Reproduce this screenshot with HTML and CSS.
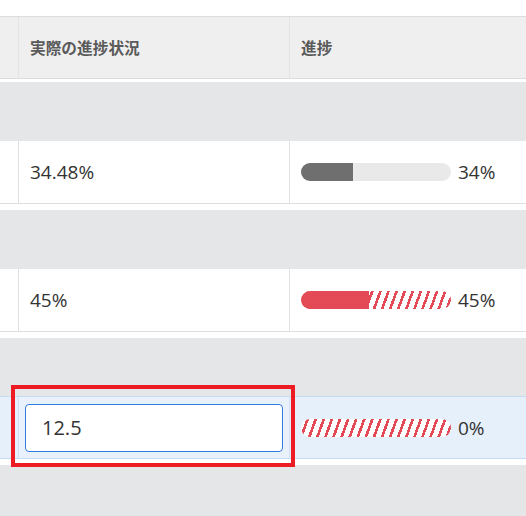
FILE: index.html
```html
<!DOCTYPE html>
<html lang="ja">
<head>
<meta charset="utf-8">
<link rel="stylesheet" href="styles.css">
</head>
<body>
<div class="table">
  <div class="row head">
    <div class="cell c1"></div>
    <div class="cell c2">実際の進捗状況</div>
    <div class="cell c3">進捗</div>
  </div>

  <div class="group"></div>
  <div class="row data">
    <div class="cell c1"></div>
    <div class="cell c2">34.48%</div>
    <div class="cell c3">
      <div class="bar"><div class="fill gray" style="width:34.48%"></div></div>
      <span class="pct">34%</span>
    </div>
  </div>

  <div class="group"></div>
  <div class="row data">
    <div class="cell c1"></div>
    <div class="cell c2">45%</div>
    <div class="cell c3">
      <div class="bar striped"><div class="fill red" style="width:45%"></div></div>
      <span class="pct">45%</span>
    </div>
  </div>

  <div class="group"></div>
  <div class="row data active">
    <div class="cell c1"></div>
    <div class="cell c2 editing">
      <input class="input" type="text" value="12.5">
      <div class="mark"></div>
    </div>
    <div class="cell c3">
      <div class="bar striped"></div>
      <span class="pct">0%</span>
    </div>
  </div>

  <div class="group"></div>
</div>
</body>
</html>
```

FILE: styles.css
```css
html, body {
  margin: 0;
  padding: 0;
  background: #ffffff;
  overflow: hidden;
}
body {
  padding-top: 16px;
  font-family: "Open Sans", "Noto Sans CJK JP", sans-serif;
  color: #333333;
}
.table {
  display: flex;
  flex-direction: column;
  width: 526px;
}
.row {
  display: flex;
  box-sizing: border-box;
}
.cell {
  box-sizing: border-box;
  display: flex;
  align-items: center;
}
.c1 {
  width: 19px;
  flex: none;
  border-right: 1px solid #e0e0e0;
}
.c2 {
  width: 271px;
  flex: none;
  border-right: 1px solid #e0e0e0;
  padding-left: 11px;
}
.c3 {
  flex: 1;
  padding-left: 11px;
}
.head {
  height: 63px;
  background: #efefef;
  border-top: 1px solid #dcdcdc;
  border-bottom: 1px solid #dcdcdc;
  margin-bottom: 3px;
  font-family: "Noto Sans CJK JP", sans-serif;
  font-weight: 700;
  font-size: 15.7px;
  color: #5a5a5a;
}
.head .c1, .head .c2 {
  border-right-color: #e4e4e4;
}
.group {
  height: 59px;
  background: #e5e6e8;
}
.data {
  height: 63px;
  border-bottom: 1px solid #dedede;
  margin-bottom: 6px;
  font-size: 19px;
}
.bar {
  width: 150px;
  height: 18px;
  border-radius: 9px;
  background: #e9e9e9;
  overflow: hidden;
  flex: none;
}
.bar.striped {
  background: repeating-linear-gradient(110deg, #ffffff 0px, #ffffff 5px, #e34a55 5px, #e34a55 7.6px);
}
.fill {
  height: 100%;
}
.fill.gray {
  background: #6f6f6f;
}
.fill.red {
  background: #e34a55;
}
.pct {
  margin-left: 7px;
}
.active {
  background: #e6f0fb;
  border-top: 1px solid #c7dcf2;
  border-bottom: 1px solid #c7dcf2;
  margin-top: -1px;
}
.active .c1, .active .c2 {
  border-right-color: #cfe0f3;
}
.data .editing {
  position: relative;
  padding-left: 6px;
  background: #e9f2fc;
}
.input {
  box-sizing: border-box;
  width: 258px;
  height: 48px;
  border: 1px solid #2f7de1;
  border-radius: 4px;
  background: #ffffff;
  padding: 0 16px;
  font-family: "Open Sans", sans-serif;
  font-size: 20px;
  color: #333333;
  outline: none;
}
.mark {
  position: absolute;
  left: -8px;
  top: -12px;
  width: 284px;
  height: 82px;
  box-sizing: border-box;
  border: 4px solid #ed1c24;
  pointer-events: none;
}
```
